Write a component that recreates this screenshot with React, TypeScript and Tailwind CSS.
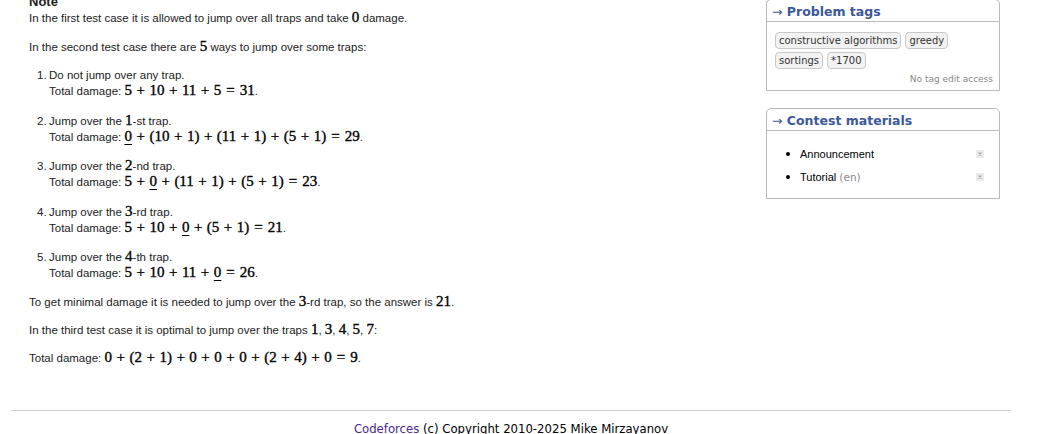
import React from 'react'

const sans = { fontFamily: '"Liberation Sans", Arial, sans-serif' }

function M({ e }: { e: string }) {
  const parts = e.split(' ')
  return (
    <span className="font-['Liberation_Serif',serif] text-[15px] leading-none text-black [-webkit-text-stroke:0.35px_black]">
      {parts.map((p, i) => {
        if (p === '+') {
          return (
            <span key={i} className="mx-[4.5px]">
              {p}
            </span>
          )
        }
        if (p === '=') {
          return (
            <span key={i} className="mx-[5px]">
              {p}
            </span>
          )
        }
        if (p.startsWith('_')) {
          return (
            <span key={i} className="underline decoration-1 underline-offset-[3px]">
              {p.slice(1)}
            </span>
          )
        }
        return <span key={i}>{p}</span>
      })}
    </span>
  )
}

const steps: { n: number; head: React.ReactNode; expr: string }[] = [
  { n: 1, head: <>Do not jump over any trap.</>, expr: '5 + 10 + 11 + 5 = 31' },
  { n: 2, head: <>Jump over the <M e="1" />-st trap.</>, expr: '_0 + (10 + 1) + (11 + 1) + (5 + 1) = 29' },
  { n: 3, head: <>Jump over the <M e="2" />-nd trap.</>, expr: '5 + _0 + (11 + 1) + (5 + 1) = 23' },
  { n: 4, head: <>Jump over the <M e="3" />-rd trap.</>, expr: '5 + 10 + _0 + (5 + 1) = 21' },
  { n: 5, head: <>Jump over the <M e="4" />-th trap.</>, expr: '5 + 10 + 11 + _0 = 26' },
]

function SideBox({ title, children, className }: { title: string; children: React.ReactNode; className?: string }) {
  return (
    <div className={`rounded-t-[5px] border border-[#b9b9b9] ${className ?? ''}`}>
      <div className="h-[22px] border-b border-[#b9b9b9] px-[5px] pt-[1px] text-[12.5px] font-bold leading-[21px] text-[#3b5998] font-['DejaVu_Sans',Verdana,sans-serif]">
        <span className="font-normal">→</span> {title}
      </div>
      {children}
    </div>
  )
}

function Tag({ t }: { t: string }) {
  return (
    <span className="inline-flex h-[17px] items-center rounded-[4px] border border-[#c8c8c8] bg-[#f2f2f2] px-[3px] text-[10px] text-[#333] font-['DejaVu_Sans',Verdana,sans-serif]">
      {t}
    </span>
  )
}

function Cross() {
  return (
    <svg width="8" height="8" viewBox="0 0 8 8" className="shrink-0">
      <rect width="8" height="8" fill="#ebebeb" />
      <path d="M2.5 2.5 L5.5 5.5 M5.5 2.5 L2.5 5.5" stroke="#a8a8a8" strokeWidth="1.1" />
    </svg>
  )
}

export default function App() {
  return (
    <div className="h-[434px] w-[1054px] overflow-hidden bg-white text-[#222]">
      <div className="flex">
        <div className="w-[766px] pl-[29px] text-[11.5px]" style={sans}>
          <div className="-mt-[6px] h-[16px] text-[13px] font-bold leading-[16px]">Note</div>
          <p className="leading-[16px]">
            In the first test case it is allowed to jump over all traps and take <M e="0" /> damage.
          </p>
          <p className="mt-[13px] leading-[16px]">
            In the second test case there are <M e="5" /> ways to jump over some traps:
          </p>
          <div className="mt-[12px] flex flex-col gap-[12px]">
            {steps.map((s) => (
              <div key={s.n} className="flex">
                <span className="ml-[8px] w-[12px]">{s.n}.</span>
                <div>
                  <div className="h-[16px] leading-[16px]">{s.head}</div>
                  <div className="h-[17.5px] leading-[17.5px]">
                    Total damage: <M e={s.expr} />.
                  </div>
                </div>
              </div>
            ))}
          </div>
          <p className="mt-[11.5px] leading-[16px]">
            To get minimal damage it is needed to jump over the <M e="3" />-rd trap, so the answer is <M e="21" />.
          </p>
          <p className="mt-[12px] leading-[16px]">
            In the third test case it is optimal to jump over the traps <M e="1" />, <M e="3" />, <M e="4" />,{' '}
            <M e="5" />, <M e="7" />:
          </p>
          <p className="mt-[11px] leading-[18px]">
            Total damage: <M e="0 + (2 + 1) + 0 + 0 + 0 + (2 + 4) + 0 = 9" />.
          </p>
        </div>

        <div className="w-[234px]">
          <SideBox title="Problem tags" className="-mt-[1px]">
            <div className="px-[8px] pb-[5px] pt-[10px]">
              <div className="flex flex-wrap gap-x-[4px] gap-y-[3px]">
                <Tag t="constructive algorithms" />
                <Tag t="greedy" />
                <Tag t="sortings" />
                <Tag t="*1700" />
              </div>
              <div className="-mr-[2px] mt-[4px] text-right text-[9px] leading-[12px] text-[#888] font-['DejaVu_Sans',Verdana,sans-serif]">
                No tag edit access
              </div>
            </div>
          </SideBox>

          <SideBox title="Contest materials" className="mt-[17px]">
            <ul className="flex flex-col gap-[9px] pb-[14px] pl-[19px] pr-[15px] pt-[16px] text-[11px] text-black" style={sans}>
              <li className="flex h-[14px] items-center">
                <span className="mr-[10px] h-[4px] w-[4px] rounded-full bg-black" />
                <span className="flex-1">Announcement</span>
                <Cross />
              </li>
              <li className="flex h-[14px] items-center">
                <span className="mr-[10px] h-[4px] w-[4px] rounded-full bg-black" />
                <span className="flex-1">
                  Tutorial <span className="text-[10.5px] text-[#888] font-['DejaVu_Sans',Verdana,sans-serif]">(en)</span>
                </span>
                <Cross />
              </li>
            </ul>
          </SideBox>
        </div>
      </div>

      <div className="mx-[11px] w-[1000px]">
        <div className="mt-[43px] border-t border-[#d0d0d0]" />
        <div className="mt-[11px] text-center text-[11.7px] leading-[14px] text-black font-['DejaVu_Sans',Verdana,sans-serif]">
          <span className="text-[#4b2a8f]">Codeforces</span> (c) Copyright 2010-2025 Mike Mirzayanov
        </div>
      </div>
    </div>
  )
}
